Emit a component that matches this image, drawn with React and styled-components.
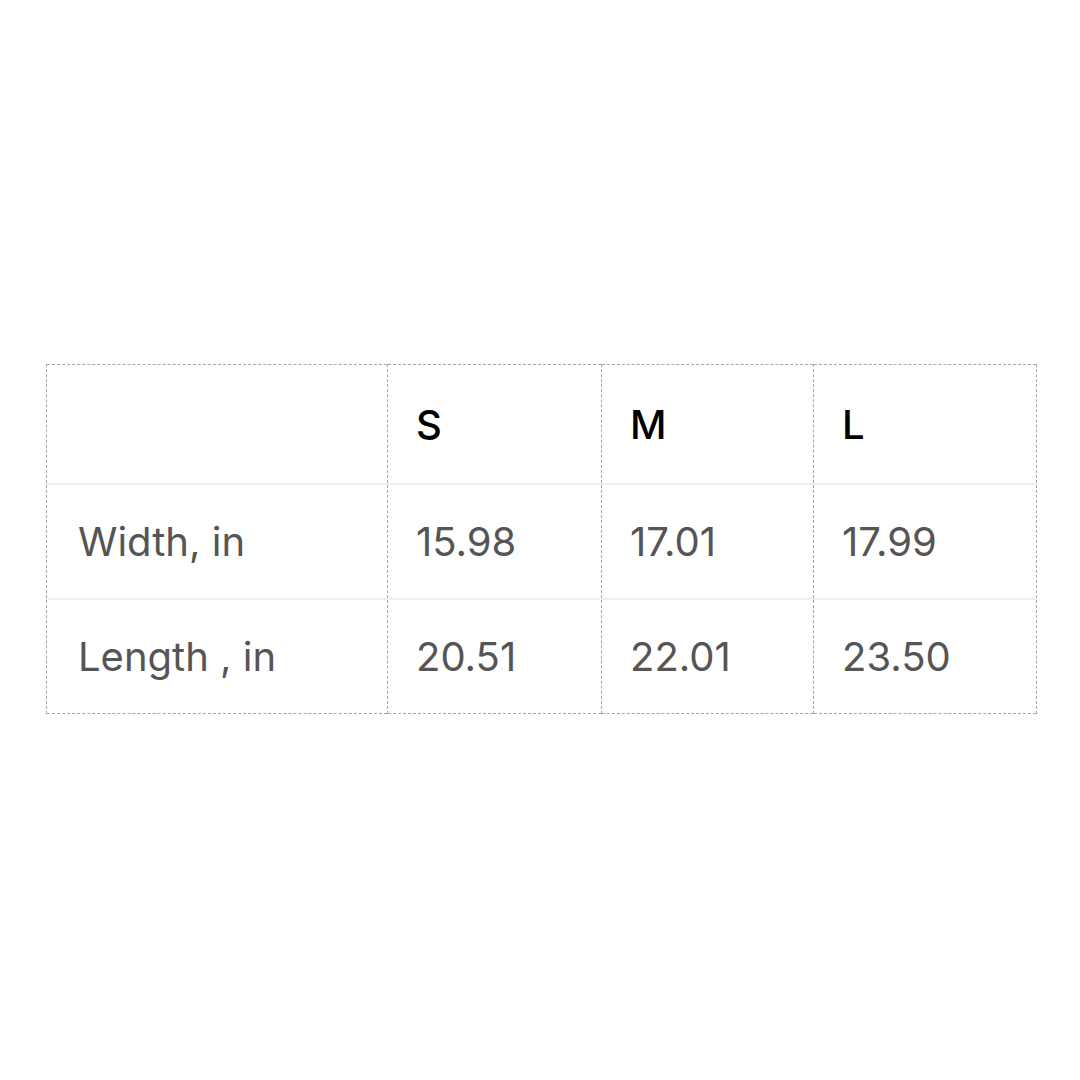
import styled, { createGlobalStyle } from 'styled-components';

const GlobalStyle = createGlobalStyle`
  html, body {
    margin: 0;
    padding: 0;
    background: #fff;
  }
  body {
    font-family: Inter, "Noto Sans", "Liberation Sans", sans-serif;
  }
`;

const sizes = ['S', 'M', 'L'];

const rows = [
  { label: 'Width, in', values: ['15.98', '17.01', '17.99'] },
  { label: 'Length , in', values: ['20.51', '22.01', '23.50'] },
];

const Page = styled.main`
  min-height: 100vh;
  display: flex;
  align-items: center;
  padding: 0 44px 2px 46px;
  box-sizing: border-box;
`;

const Table = styled.table`
  width: 100%;
  border-collapse: collapse;
  border: 1px dashed #a6a6a6;
  table-layout: fixed;
`;

const Row = styled.tr`
  border-top: 2px solid #efefef;
`;

const HeadRow = styled.tr``;

const Cell = styled.td`
  border-left: 1px dashed #a6a6a6;
  border-right: 1px dashed #a6a6a6;
  padding: 0 0 0 ${(p) => (p.$first ? 31 : 28)}px;
  height: ${(p) => (p.$head ? 118 : 113)}px;
  font-size: 40px;
  font-weight: ${(p) => (p.$head ? 500 : 400)};
  color: ${(p) => (p.$head ? '#000' : '#555')};
  text-align: left;
  vertical-align: middle;
`;

const Col = styled.col`
  width: ${(p) => p.$w}px;
`;

export default function App() {
  return (
    <>
      <GlobalStyle />
      <Page>
        <Table>
          <colgroup>
            <Col $w={341} />
            <Col $w={214} />
            <Col $w={212} />
            <Col $w={223} />
          </colgroup>
          <thead>
            <HeadRow>
              <Cell as="th" $head $first />
              {sizes.map((s) => (
                <Cell as="th" $head key={s}>
                  {s}
                </Cell>
              ))}
            </HeadRow>
          </thead>
          <tbody>
            {rows.map((r) => (
              <Row key={r.label}>
                <Cell $first>{r.label}</Cell>
                {r.values.map((v, i) => (
                  <Cell key={i}>{v}</Cell>
                ))}
              </Row>
            ))}
          </tbody>
        </Table>
      </Page>
    </>
  );
}
